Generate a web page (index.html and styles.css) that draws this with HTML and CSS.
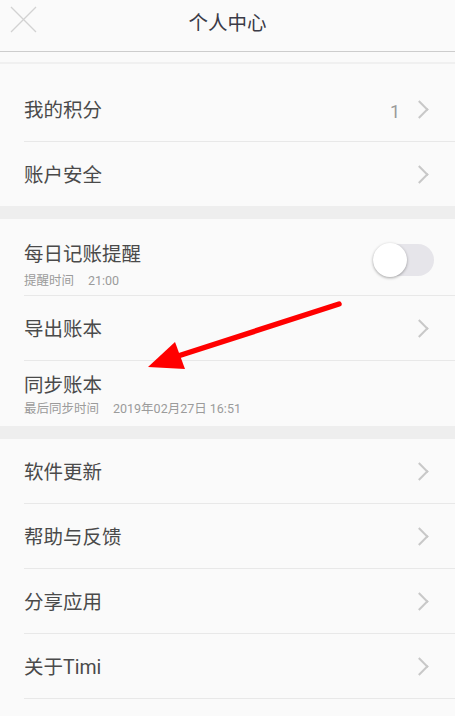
FILE: index.html
```html
<!DOCTYPE html>
<html lang="zh-CN">
<head>
    <meta charset="UTF-8">
    <title>个人中心</title>
    <link rel="stylesheet" href="styles.css">
</head>
<body>
    <div class="page">
        <div class="header">
            <div class="close">
                <svg width="27" height="27" viewBox="0 0 27 27">
                    <path d="M1 1 L26 26 M26 1 L1 26" stroke="#d2d2d2" stroke-width="1.3" fill="none"/>
                </svg>
            </div>
            <div class="title">个人中心</div>
            <div></div>
        </div>
        <div class="top-space"></div>

        <div class="group">
            <div class="row first">
                <span class="label">我的积分</span>
                <span class="right"><span class="value">1</span><span class="chevron"></span></span>
            </div>
            <div class="row">
                <span class="label">账户安全</span>
                <span class="right"><span class="chevron"></span></span>
            </div>
        </div>

        <div class="gap"></div>

        <div class="group">
            <div class="row two-line remind">
                <div>
                    <div class="label">每日记账提醒</div>
                    <div class="sub">提醒时间<span class="sub-val">21:00</span></div>
                </div>
                <div class="toggle"><div class="knob"></div></div>
            </div>
            <div class="row">
                <span class="label">导出账本</span>
                <span class="right"><span class="chevron"></span></span>
            </div>
            <div class="row two-line sync">
                <div>
                    <div class="label">同步账本</div>
                    <div class="sub">最后同步时间<span class="sub-val">2019年02月27日 16:51</span></div>
                </div>
            </div>
        </div>

        <div class="gap"></div>

        <div class="group">
            <div class="row">
                <span class="label">软件更新</span>
                <span class="right"><span class="chevron"></span></span>
            </div>
            <div class="row">
                <span class="label">帮助与反馈</span>
                <span class="right"><span class="chevron"></span></span>
            </div>
            <div class="row">
                <span class="label">分享应用</span>
                <span class="right"><span class="chevron"></span></span>
            </div>
            <div class="row last">
                <span class="label">关于Timi</span>
                <span class="right"><span class="chevron"></span></span>
            </div>
        </div>

        <svg class="arrow" width="455" height="716" viewBox="0 0 455 716">
            <line x1="339" y1="304" x2="178" y2="356" stroke="#ff0000" stroke-width="5.5" stroke-linecap="round"/>
            <polygon points="148,367 175,342 185,369" fill="#ff0000"/>
        </svg>
    </div>
</body>
</html>
```

FILE: styles.css
```css
body {
    margin: 0;
    background-color: #fafafa;
    font-family: Roboto, "Noto Sans CJK SC", sans-serif;
    color: #4a4a4a;
}
.page {
    position: relative;
    width: 455px;
    height: 716px;
    overflow: hidden;
}
.header {
    height: 51px;
    border-bottom: 1px solid #cdcdcd;
    display: grid;
    grid-template-columns: 1fr auto 1fr;
    align-items: center;
}
.close {
    padding-left: 10px;
    height: 27px;
    margin-top: -12px;
}
.title {
    font-size: 19.5px;
    color: #3b3b47;
    margin-top: -9px;
}
.top-space {
    height: 10px;
    border-bottom: 2px solid #f0f0f0;
}
.gap {
    height: 13px;
    background-color: #eeeeee;
}
.row {
    margin-left: 24px;
    padding-right: 24px;
    padding-top: 4px;
    height: 60px;
    border-bottom: 1px solid #e8e8e8;
    display: flex;
    align-items: center;
    justify-content: space-between;
}
.group .row:last-child {
    border-bottom: none;
}
.group .row.last {
    border-bottom: 1px solid #e8e8e8;
}
.row.first {
    padding-top: 17px;
}
.label {
    font-size: 19.5px;
    line-height: 24px;
}
.right {
    display: flex;
    align-items: center;
    gap: 13px;
}
.value {
    font-size: 18px;
    color: #9a9a9a;
}
.chevron {
    width: 11px;
    height: 11px;
    border-top: 2.5px solid #c8c8c8;
    border-right: 2.5px solid #c8c8c8;
    transform: rotate(45deg);
    margin-right: 5px;
    margin-top: -3px;
}
.two-line {
    align-items: flex-start;
    height: auto;
}
.remind {
    padding-top: 24px;
    padding-bottom: 6px;
    padding-right: 21px;
}
.sync {
    padding-top: 13px;
    padding-bottom: 9px;
}
.sub {
    font-size: 12.5px;
    line-height: 16px;
    color: #9b9b9b;
}
.remind .sub {
    margin-top: 6px;
}
.sync .sub {
    margin-top: 3px;
}
.sub-val {
    margin-left: 14px;
}
.toggle {
    position: relative;
    width: 61px;
    height: 32px;
    border-radius: 16px;
    background-color: #e6e5ea;
    margin-top: 1px;
}
.knob {
    position: absolute;
    left: 0;
    top: -1px;
    width: 34px;
    height: 34px;
    border-radius: 50%;
    background-color: #ffffff;
    box-shadow: 0 1px 3px rgba(0,0,0,0.35);
}
.arrow {
    position: absolute;
    left: 0;
    top: 0;
    pointer-events: none;
}
```
